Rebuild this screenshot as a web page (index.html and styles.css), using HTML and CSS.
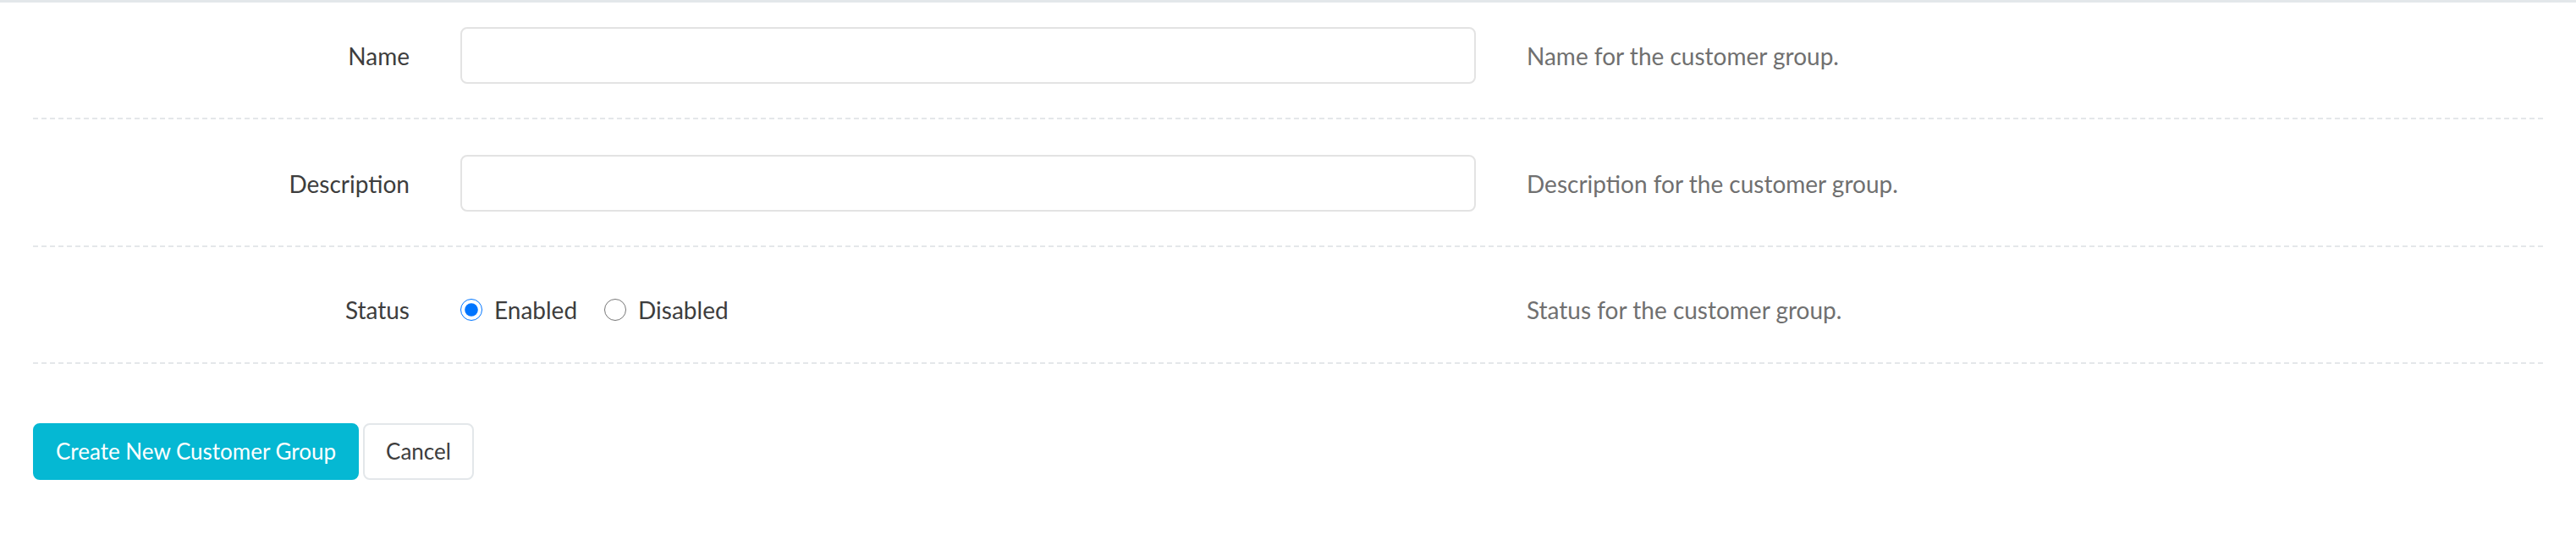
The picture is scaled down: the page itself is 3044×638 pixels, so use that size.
FILE: index.html
```html
<!DOCTYPE html>
<html>
  <head>
    <meta name="viewport" content="width=device-width, initial-scale=1.0" />
    <title>New Customer Group</title>
    <link rel="stylesheet" href="styles.css">
  </head>
  <body>
    <main>
      <form id="group" class="group-form">
        <div class="form-row">
          <label class="form-label" for="name">Name</label>
          <input type="text" id="name" name="name" class="form-input" />
          <p class="form-help">Name for the customer group.</p>
        </div>
        <div class="form-row">
          <label class="form-label" for="description">Description</label>
          <input type="text" id="description" name="description" class="form-input" />
          <p class="form-help">Description for the customer group.</p>
        </div>
        <div class="form-row form-row-status">
          <span class="form-label">Status</span>
          <div class="radio-group">
            <label class="radio"><input type="radio" name="status" value="1" checked /> Enabled</label>
            <label class="radio"><input type="radio" name="status" value="0" /> Disabled</label>
          </div>
          <p class="form-help">Status for the customer group.</p>
        </div>
        <div class="form-actions">
          <button type="submit" class="btn btn-info">Create New Customer Group</button>
          <a href="#" class="btn btn-default">Cancel</a>
        </div>
      </form>
    </main>
  </body>
</html>
```

FILE: styles.css
```css
* {
padding: 0;
margin: 0;
box-sizing: border-box;
}
body {
font-family: Lato, "Liberation Sans", sans-serif;
font-size: 28px;
line-height: 44px;
color: #3d3d3d;
background-color: #fff;
border-top: 3px solid #e3e7ea;
}
.group-form {
padding: 0 39px 0 39px;
}
.form-row {
display: grid;
grid-template-columns: 445px 1200px 1fr;
column-gap: 60px;
align-items: center;
padding: 42px 0 40px;
border-bottom: 2px dashed #e4e7ea;
}
.form-row:first-child {
padding-top: 29px;
}
.form-row-status {
padding-top: 52px;
}
.form-label {
text-align: right;
}
.form-input {
width: 100%;
height: 67px;
padding: 0 24px;
border: 2px solid #e3e3e3;
border-radius: 8px;
font: inherit;
color: #3d3d3d;
outline: none;
}
.form-help {
color: #707070;
}
.radio-group {
display: flex;
align-items: center;
gap: 32px;
}
.radio {
display: flex;
align-items: center;
gap: 14px;
}
.radio input {
width: 26px;
height: 26px;
margin: 0;
}
.form-actions {
display: flex;
gap: 5px;
padding-top: 70px;
}
.btn {
display: inline-block;
height: 67px;
padding: 0 25px;
border: 2px solid transparent;
border-radius: 8px;
font-family: inherit;
font-size: 26px;
line-height: 63px;
text-decoration: none;
cursor: pointer;
}
.btn-info {
background-color: #05b8d3;
border-color: #05b8d3;
color: #fff;
}
.btn-default {
background-color: #fff;
border-color: #e3e7ea;
color: #3d3d3d;
}
```
